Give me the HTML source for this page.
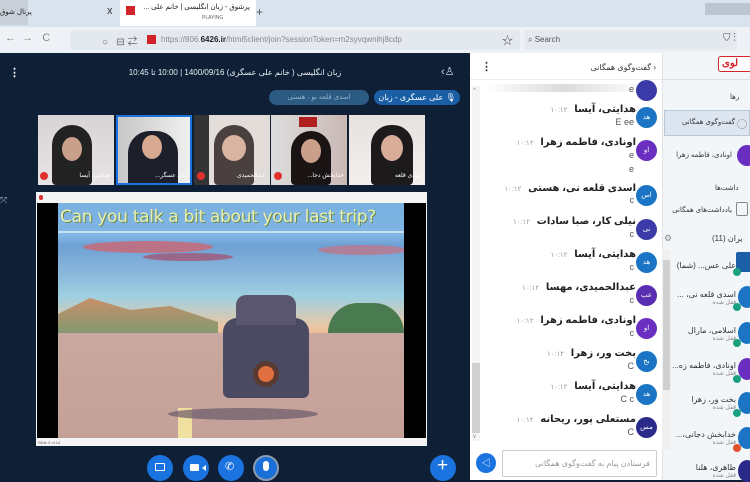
<!DOCTYPE html>
<html><head><meta charset="utf-8">
<style>
*{margin:0;padding:0;box-sizing:border-box}
body{width:750px;height:480px;overflow:hidden;position:relative;font-family:"Liberation Sans","Noto Sans CJK SC",sans-serif;background:#0f2036}
.a{position:absolute}
.fa{font-family:"Liberation Sans","Noto Sans CJK SC","DejaVu Sans",sans-serif;direction:rtl}
.av{position:absolute;width:21px;height:21px;border-radius:50%;color:#fff;font-size:7px;text-align:center;line-height:21px}
.msg{position:absolute;right:114px;text-align:right;font-size:10px;font-weight:bold;color:#222;white-space:nowrap}
.msg span{font-weight:normal;color:#999;font-size:7px;margin-right:4px}
.txt{position:absolute;right:116px;font-size:9px;color:#555}
.thumb{position:absolute;top:115px;width:76px;height:70px;overflow:hidden}
.btn{position:absolute;width:26px;height:26px;border-radius:50%;background:#1b73e0;top:455px}
.pl{position:absolute;right:14px;font-size:8px;color:#333;text-align:right;white-space:nowrap}
.pl i{display:block;font-style:normal;font-size:6px;color:#888}
.pav{position:absolute;left:738px;width:18px;height:22px;border-radius:50%}
</style></head><body>
<!-- tab bar -->
<div class="a" style="left:0;top:0;width:750px;height:27px;background:#d9e3ee"></div>
<div class="a" style="left:0;top:0;width:28px;height:25px;background:#c8cfd8"></div>
<div class="a fa" style="left:0;top:8px;font-size:7px;color:#222;white-space:nowrap">پرتال شوق</div>
<div class="a" style="left:107px;top:5px;font-size:11px;color:#333">x</div>
<div class="a" style="left:120px;top:0;width:136px;height:26px;background:#fff"></div>
<div class="a" style="left:126px;top:6px;width:9px;height:9px;background:#d2232a"></div>
<div class="a fa" style="left:138px;top:3px;font-size:7px;color:#222;width:112px;text-align:right;white-space:nowrap;overflow:hidden">پرشوق - زبان انگلیسی | خانم علی ...</div>
<div class="a" style="left:202px;top:15px;font-size:5px;color:#666">PLAYING</div>
<div class="a" style="left:256px;top:5px;font-size:12px;color:#555">+</div>
<div class="a" style="left:705px;top:3px;width:45px;height:12px;background:#bcc6d2"></div>
<!-- address bar -->
<div class="a" style="left:0;top:27px;width:750px;height:26px;background:#eef2f7"></div>
<div class="a" style="left:5px;top:32px;font-size:11px;color:#888">←&nbsp;&nbsp;→&nbsp;&nbsp;&nbsp;C</div>
<div class="a" style="left:70px;top:30px;width:450px;height:20px;background:#e4e9f0;border-radius:3px"></div>
<div class="a" style="left:102px;top:33px;font-size:10px;color:#666">○&nbsp;&nbsp;&nbsp;⊟ ⇄</div>
<div class="a" style="left:147px;top:35px;width:9px;height:9px;background:#d2232a"></div>
<div class="a" style="left:161px;top:35px;font-size:8px;color:#888">https://806.<b style="color:#222">6426.ir</b>/html5client/join?sessionToken=m2syvqwnihj8cdp</div>
<div class="a" style="left:502px;top:32px;font-size:11px;color:#555">☆</div>
<div class="a" style="left:525px;top:30px;width:212px;height:20px;background:#e4e9f0"></div>
<div class="a" style="left:528px;top:35px;font-size:8px;color:#555">⌕ Search</div>
<div class="a" style="left:723px;top:33px;font-size:10px;color:#555">⛉ ⋮</div>
<!-- main dark area -->
<div class="a" style="left:0;top:53px;width:470px;height:427px;background:#0f2036"></div>
<div class="a" style="left:9px;top:66px;font-size:11px;color:#fff;font-weight:bold">⋮</div>
<div class="a fa" style="left:100px;top:68px;font-size:8px;color:#e8eef5;width:270px;text-align:center;white-space:nowrap">زبان انگلیسی ( خانم علی عسگری) 1400/09/16 | 10:00 تا 10:45</div>
<div class="a" style="left:441px;top:65px;font-size:11px;color:#cfd8e3">‹♙</div>
<div class="a fa" style="left:374px;top:90px;width:86px;height:15px;border-radius:8px;background:#1a5fa6;color:#fff;font-size:8px;line-height:15px;text-align:center;white-space:nowrap">🎙 علی عسگری - زبان</div>
<div class="a fa" style="left:269px;top:90px;width:100px;height:15px;border-radius:8px;background:#2b5b82;color:#8fb0cc;font-size:7px;line-height:15px;text-align:center;white-space:nowrap">اسدی قلعه نو ، هستی</div>
<!-- thumbnails -->
<div class="thumb" style="left:38px;background:linear-gradient(#d8d4d6,#e8e4e6)"><div class="a" style="left:14px;top:10px;width:40px;height:60px;border-radius:20px 20px 4px 4px;background:#222"></div><div class="a" style="left:24px;top:22px;width:20px;height:24px;border-radius:50%;background:#c9a08c"></div></div>
<div class="thumb" style="left:116px;border:2px solid #1b73e0;background:linear-gradient(90deg,#c8c6c8,#f0f0f0)"><div class="a" style="left:10px;top:14px;width:50px;height:56px;border-radius:22px 22px 4px 4px;background:#1d1f2a"></div><div class="a" style="left:24px;top:18px;width:20px;height:24px;border-radius:50%;background:#d6a990"></div></div>
<div class="thumb" style="left:194px;background:linear-gradient(90deg,#333 20%,#e2ddd8 20%)"><div class="a" style="left:20px;top:10px;width:40px;height:60px;border-radius:20px 20px 4px 4px;background:#4a4040"></div><div class="a" style="left:28px;top:20px;width:24px;height:26px;border-radius:50%;background:#d9b4a0"></div></div>
<div class="thumb" style="left:271px;background:linear-gradient(90deg,#ddd,#c9b8b4)"><div class="a" style="left:20px;top:16px;width:40px;height:54px;border-radius:20px 20px 4px 4px;background:#1a1414"></div><div class="a" style="left:30px;top:24px;width:20px;height:24px;border-radius:50%;background:#caa08a"></div><div class="a" style="left:28px;top:2px;width:18px;height:10px;background:#b02020"></div></div>
<div class="thumb" style="left:349px;background:linear-gradient(#e6e2df,#f2efec)"><div class="a" style="left:22px;top:10px;width:42px;height:60px;border-radius:20px 20px 4px 4px;background:#1d1a1c"></div><div class="a" style="left:32px;top:20px;width:22px;height:26px;border-radius:50%;background:#d8ae98"></div></div>
<div class="a fa" style="left:40px;top:172px;width:422px;height:12px;font-size:6px;color:#fff">
<span class="a" style="right:352px;top:0">هدایتی، آیسا</span><span class="a" style="right:274px">علی عسگر...</span><span class="a" style="right:196px">عبدالحمیدی</span><span class="a" style="right:118px">خدابخش دجا...</span><span class="a" style="right:40px">اسدی قلعه</span></div>
<div class="a" style="left:40px;top:172px;width:8px;height:8px;border-radius:50%;background:#e0322c"></div>
<div class="a" style="left:197px;top:172px;width:8px;height:8px;border-radius:50%;background:#e0322c"></div>
<div class="a" style="left:274px;top:172px;width:8px;height:8px;border-radius:50%;background:#e0322c"></div>
<div class="a" style="left:0;top:195px;font-size:9px;color:#aab">⤧</div>
<!-- presentation -->
<div class="a" style="left:36px;top:192px;width:391px;height:254px;background:#f4f4f4"></div>
<div class="a" style="left:37px;top:203px;width:389px;height:235px;background:#000"></div>
<div class="a" style="left:39px;top:195px;width:4px;height:5px;background:#d33;border-radius:2px"></div>
<div class="a" style="left:58px;top:203px;width:346px;height:235px;overflow:hidden;background:linear-gradient(#7ab0e0 0%,#7fb6e4 14%,#6fa0d4 18%,#8ab8dc 30%,#9fd0e0 40%,#e8c8a8 52%,#f0b890 57%,#c89890 62%,#c8a8a8 68%,#c09890 100%)">
 <div class="a" style="left:0;top:28px;width:346px;height:2px;background:#c8e0f0"></div>
 <div class="a" style="left:2px;top:4px;width:346px;font-family:'DejaVu Sans','Liberation Sans',sans-serif;font-size:17px;color:#e8f0b0;text-shadow:1px 1px 0 #6a8a50;white-space:nowrap;letter-spacing:-0.3px">Can you talk a bit about your last trip?</div>
 <div class="a" style="left:25px;top:38px;width:130px;height:12px;background:#c86a78;border-radius:50%;opacity:.85"></div>
 <div class="a" style="left:85px;top:50px;width:90px;height:8px;background:#a05878;border-radius:50%;opacity:.8"></div>
 <div class="a" style="left:260px;top:42px;width:90px;height:10px;background:#c87080;border-radius:50%;opacity:.7"></div>
 <div class="a" style="left:0;top:95px;width:160px;height:40px;background:linear-gradient(#c8906a,#7a9a70);clip-path:polygon(0 40%,20% 0,45% 30%,70% 20%,100% 60%,100% 100%,0 100%)"></div>
 <div class="a" style="left:270px;top:100px;width:76px;height:40px;background:#4a7a50;border-radius:30px 30px 0 0"></div>
 <div class="a" style="left:0;top:130px;width:346px;height:105px;background:linear-gradient(#c8a8a0,#c4a098)"></div>
 <div class="a" style="left:120px;top:205px;width:14px;height:30px;background:#f0e0a0"></div>
 <div class="a" style="left:110px;top:205px;width:150px;height:12px;background:#6a5a6a;border-radius:50%;opacity:.7"></div>
 <div class="a" style="left:165px;top:115px;width:86px;height:80px;background:#4a4a62;border-radius:14px 14px 6px 6px"></div>
 <div class="a" style="left:178px;top:92px;width:60px;height:30px;background:#5a5670;border-radius:10px 10px 0 0"></div>
 <div class="a" style="left:195px;top:158px;width:26px;height:26px;border-radius:50%;background:#e07040;border:5px solid #5a3a30"></div>
</div>
<div class="a" style="left:38px;top:440px;font-size:4px;color:#666">Slide 2 of 14</div>
<!-- buttons -->
<div class="btn" style="left:147px"></div><div class="btn" style="left:183px"></div><div class="btn" style="left:218px"></div>
<div class="btn" style="left:253px;border:2px solid #8a9ab0;background:#1b6fd8"></div>
<div class="btn" style="left:430px"></div>
<div class="a" style="left:155px;top:463px;width:10px;height:8px;border:1.5px solid #fff;border-radius:1px"></div>
<div class="a" style="left:190px;top:464px;width:9px;height:7px;background:#fff;border-radius:1px"></div><div class="a" style="left:199px;top:465px;width:0;height:0;border:3px solid transparent;border-right:4px solid #fff"></div>
<div class="a" style="left:225px;top:460px;font-size:11px;color:#fff">✆</div>
<div class="a" style="left:263px;top:461px;width:6px;height:10px;background:#fff;border-radius:3px"></div>
<div class="a" style="left:437px;top:455px;font-size:19px;color:#fff">+</div>
<!-- chat panel -->
<div class="a" style="left:470px;top:53px;width:192px;height:427px;background:#fff"></div>
<div class="a" style="left:481px;top:60px;font-size:11px;color:#333;font-weight:bold">⋮</div>
<div class="a fa" style="left:540px;top:63px;width:116px;font-size:8px;color:#333;text-align:right;white-space:nowrap">‹ گفت‌وگوی همگانی</div>
<div class="a" style="left:470px;top:79px;width:192px;height:1px;background:#eee"></div>
<div class="a" style="left:484px;top:84px;width:160px;height:8px;background:linear-gradient(90deg,#fff,#ccc 50%,#fff);border-radius:4px;opacity:.7"></div>
<div class="a" style="left:472px;top:86px;width:8px;height:355px;background:#f4f4f4"></div>
<div class="a" style="left:472px;top:363px;width:8px;height:70px;background:#d0d0d0"></div>
<div class="a" style="left:473px;top:88px;font-size:6px;color:#888">^</div>
<div class="a" style="left:473px;top:434px;font-size:6px;color:#888">v</div>
<div class="av" style="left:636px;top:80px;background:#3a3aa8"></div>
<div class="txt" style="top:84px">e</div>
<div class="av" style="left:636px;top:107px;background:#1b74c4">هد</div><div class="msg fa" style="top:104px">هدایتی، آیسا <span>۱۰:۱۲</span></div><div class="txt" style="top:117px">E ee</div>
<div class="av" style="left:636px;top:140px;background:#6a2ec0">او</div><div class="msg fa" style="top:137px">اونادی، فاطمه زهرا <span>۱۰:۱۲</span></div><div class="txt" style="top:150px">e</div><div class="txt" style="top:164px">e</div>
<div class="av" style="left:636px;top:185px;background:#1b74c4">اس</div><div class="msg fa" style="top:183px">اسدی قلعه نی، هستی <span>۱۰:۱۲</span></div><div class="txt" style="top:195px">c</div>
<div class="av" style="left:636px;top:219px;background:#3a3aa8">نی</div><div class="msg fa" style="top:216px">نیلی کار، صبا سادات <span>۱۰:۱۲</span></div><div class="txt" style="top:229px">c</div>
<div class="av" style="left:636px;top:252px;background:#1b74c4">هد</div><div class="msg fa" style="top:249px">هدایتی، آیسا <span>۱۰:۱۲</span></div><div class="txt" style="top:262px">c</div>
<div class="av" style="left:636px;top:285px;background:#5a2eb0">عب</div><div class="msg fa" style="top:282px">عبدالحمیدی، مهسا <span>۱۰:۱۲</span></div><div class="txt" style="top:295px">c</div>
<div class="av" style="left:636px;top:318px;background:#6a2ec0">او</div><div class="msg fa" style="top:315px">اونادی، فاطمه زهرا <span>۱۰:۱۲</span></div><div class="txt" style="top:328px">c</div>
<div class="av" style="left:636px;top:351px;background:#1b74c4">بخ</div><div class="msg fa" style="top:348px">بخت ور، زهرا <span>۱۰:۱۲</span></div><div class="txt" style="top:361px">C</div>
<div class="av" style="left:636px;top:384px;background:#1b74c4">هد</div><div class="msg fa" style="top:381px">هدایتی، آیسا <span>۱۰:۱۲</span></div><div class="txt" style="top:394px">C c</div>
<div class="av" style="left:636px;top:417px;background:#2a2a8a">مس</div><div class="msg fa" style="top:414px">مستعلی پور، ریحانه <span>۱۰:۱۲</span></div><div class="txt" style="top:427px">C</div>
<div class="a" style="left:476px;top:453px;width:20px;height:20px;border-radius:50%;background:#1b73e0;color:#fff;font-size:9px;text-align:center;line-height:20px">◁</div>
<div class="a fa" style="left:502px;top:450px;width:155px;height:27px;border:1px solid #ccc;border-radius:2px;font-size:8px;color:#999;padding:8px 6px;text-align:right;white-space:nowrap">فرستادن پیام به گفت‌وگوی همگانی</div>
<!-- right sidebar -->
<div class="a" style="left:662px;top:53px;width:88px;height:427px;background:#f3f6f9;border-left:1px solid #e0e4e8"></div>
<div class="a" style="left:718px;top:56px;width:34px;height:16px;border:1.5px solid #d2232a;border-radius:3px;background:#fff;color:#d2232a;font-size:10px;font-weight:bold;line-height:13px;padding-left:3px">لوی</div>
<div class="a" style="left:662px;top:79px;width:88px;height:1px;background:#dde"></div>
<div class="a fa" style="left:730px;top:93px;font-size:7px;color:#333">رها</div>
<div class="a fa" style="left:664px;top:110px;width:86px;height:26px;background:#dde6f0;border:1px solid #b8c8d8;font-size:7px;color:#333;line-height:24px;text-align:right;padding-right:14px;white-space:nowrap">گفت‌وگوی همگانی</div>
<div class="a" style="left:737px;top:116px;font-size:10px;color:#666">◯</div>
<div class="a fa" style="left:664px;top:151px;width:68px;font-size:7px;color:#333;text-align:right;white-space:nowrap">اونادی، فاطمه زهرا</div>
<div class="a" style="left:737px;top:145px;width:20px;height:21px;border-radius:50%;background:#6a2ec0"></div>
<div class="a fa" style="left:715px;top:184px;font-size:7px;color:#333">داشت‌ها</div>
<div class="a fa" style="left:664px;top:206px;width:68px;font-size:7px;color:#333;text-align:right;white-space:nowrap">یادداشت‌های همگانی</div>
<div class="a" style="left:736px;top:202px;width:12px;height:14px;border:1px solid #888;border-radius:2px"></div>
<div class="a" style="left:664px;top:233px;font-size:9px;color:#888">⚙</div>
<div class="a fa" style="left:712px;top:234px;font-size:8px;color:#333">یران (11)</div>
<div class="a" style="left:662px;top:250px;width:9px;height:200px;background:#f0f0f0"></div>
<div class="a" style="left:663px;top:260px;width:7px;height:130px;background:#d0d0d0"></div>
<div class="a" style="left:736px;top:252px;width:16px;height:20px;background:#1b5fa6;border-radius:2px"></div>
<div class="pl fa" style="top:261px">علی عس... (شما)</div>
<div class="pav" style="top:286px;background:#1b74c4"></div><div class="pl fa" style="top:290px">اسدی قلعه نی، ...<i>قفل شده</i></div>
<div class="pav" style="top:322px;background:#1b74c4"></div><div class="pl fa" style="top:326px">اسلامی، مارال<i>قفل شده</i></div>
<div class="pav" style="top:358px;background:#6a2ec0"></div><div class="pl fa" style="top:361px">اونادی، فاطمه زه...<i>قفل شده</i></div>
<div class="pav" style="top:392px;background:#1b74c4"></div><div class="pl fa" style="top:395px">بخت ور، زهرا<i>قفل شده</i></div>
<div class="pav" style="top:427px;background:#1b74c4"></div><div class="pl fa" style="top:430px">خدابخش دجانی،...<i>قفل شده</i></div>
<div class="pav" style="top:460px;background:#2a2a8a"></div><div class="pl fa" style="top:463px">طاهری، هلنا<i>قفل شده</i></div>
<div class="a" style="left:733px;top:268px;width:8px;height:8px;border-radius:50%;background:#1aa080"></div>
<div class="a" style="left:733px;top:303px;width:8px;height:8px;border-radius:50%;background:#1aa080"></div>
<div class="a" style="left:733px;top:339px;width:8px;height:8px;border-radius:50%;background:#1aa080"></div>
<div class="a" style="left:733px;top:375px;width:8px;height:8px;border-radius:50%;background:#1aa080"></div>
<div class="a" style="left:733px;top:409px;width:8px;height:8px;border-radius:50%;background:#1aa080"></div>
<div class="a" style="left:733px;top:444px;width:8px;height:8px;border-radius:50%;background:#e0502c"></div>
</body></html>
